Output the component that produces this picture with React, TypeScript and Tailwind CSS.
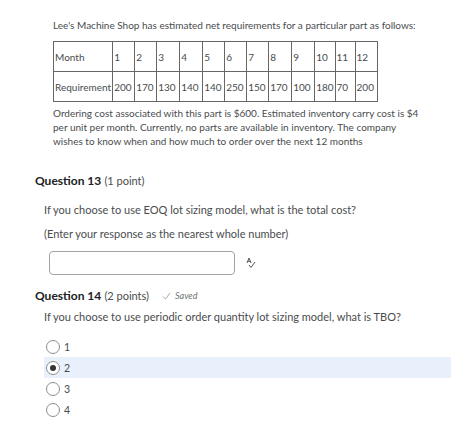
import React from "react";

const months = ["1","2","3","4","5","6","7","8","9","10","11","12"];
const reqs = ["200","170","130","140","140","250","150","170","100","180","70","200"];
const widths = [22,22,23,23,22,22,22,23,23,20,20,22];

function Radio({ checked }: { checked?: boolean }) {
  return (
    <span className="flex h-[14px] w-[14px] items-center justify-center rounded-full border border-[#8a8d90] bg-white">
      {checked && <span className="h-[6px] w-[6px] rounded-full bg-[#333]" />}
    </span>
  );
}

export default function App() {
  const opts = ["1", "2", "3", "4"];
  return (
    <div className="h-[429px] w-[465px] bg-white text-[#494c4e]" style={{ fontFamily: "Lato, 'Noto Sans', sans-serif" }}>
      <div className="pl-[53px] pt-[18px] text-[10px] leading-[14px]">
        <p>Lee's Machine Shop has estimated net requirements for a particular part as follows:</p>
        <table className="mt-[9px] border-collapse text-[10px]">
          <tbody>
            <tr>
              <td className="h-[30px] w-[57px] border border-[#666] px-px align-middle">Month</td>
              {months.map((m, i) => (
                <td key={m} className="h-[30px] border border-[#666] px-px align-middle" style={{ width: widths[i] }}>{m}</td>
              ))}
            </tr>
            <tr>
              <td className="h-[30px] border border-[#666] px-px align-middle">Requirement</td>
              {reqs.map((r, i) => (
                <td key={i} className="h-[30px] border border-[#666] px-px align-middle">{r}</td>
              ))}
            </tr>
          </tbody>
        </table>
        <p className="mt-[4px] w-[370px]">
          Ordering cost associated with this part is $600. Estimated inventory carry cost is $4 per unit per month. Currently, no parts are available in inventory. The company wishes to know when and how much to order over the next 12 months
        </p>
      </div>

      <div className="pl-[35px] pt-[25px]">
        <h2 className="text-[12px] leading-[16px]"><span className="font-bold text-[#202122]">Question 13</span> <span className="text-[11px]">(1 point)</span></h2>
      </div>
      <div className="pl-[44px] pt-[14px] text-[11px] leading-[14px]">
        <p>If you choose to use EOQ lot sizing model, what is the total cost?</p>
        <p className="mt-[10px]">(Enter your response as the nearest whole number)</p>
        <div className="mt-[10px] flex items-center">
          <div className="ml-[5px] h-[24px] w-[186px] rounded-[4px] border border-[#a0a3a6] bg-white" />
          <svg className="ml-[10px]" width="12" height="12" viewBox="0 0 12 12" fill="none" stroke="#555" strokeWidth="1">
            <path d="M2 6 L4 1 L6 6 M2.7 4.3 H5.3" />
            <path d="M4 8 L6 10.5 L10 5" />
          </svg>
        </div>
      </div>

      <div className="flex items-center pl-[35px] pt-[13px]">
        <h2 className="text-[12px] leading-[16px]"><span className="font-bold text-[#202122]">Question 14</span> <span className="text-[11px]">(2 points)</span></h2>
        <span className="ml-[13px] flex items-center text-[9px] italic text-[#6e7376]">
          <svg width="9" height="8" viewBox="0 0 9 8" fill="none" stroke="#a5a8ab" strokeWidth="1"><path d="M1 4.5 L3.5 7 L8 1" /></svg>
          <span className="ml-[4px]">Saved</span>
        </span>
      </div>
      <div className="pl-[44px] pt-[6px] text-[11px] leading-[14px]">
        <p>If you choose to use periodic order quantity lot sizing model, what is TBO?</p>
        <div className="mt-[12px] flex flex-col">
          {opts.map((o) => (
            <div key={o} className={`flex h-[21px] w-[407px] items-center ${o === "2" ? "bg-[#e8f1fb]" : ""}`}>
              <span className="ml-[2px]"><Radio checked={o === "2"} /></span>
              <span className="ml-[4px] text-[10.5px]">{o}</span>
            </div>
          ))}
        </div>
      </div>
    </div>
  );
}
